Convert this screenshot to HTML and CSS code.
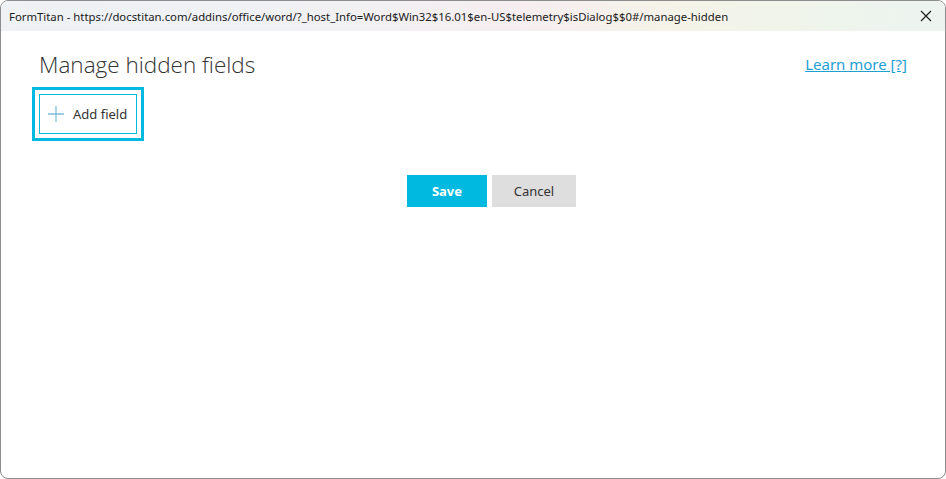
FILE: index.html
```html
<!DOCTYPE html>
<html lang="en">
<head>
  <meta charset="UTF-8" />
  <title>FormTitan - Manage hidden fields</title>
  <link rel="stylesheet" href="styles.css">
</head>
<body>
  <div class="window">
    <div class="titlebar">
      <span class="title">FormTitan - https://docstitan.com/addins/office/word/?_host_Info=Word$Win32$16.01$en-US$telemetry$isDialog$$0#/manage-hidden</span>
      <span class="close">
        <svg width="12" height="12" viewBox="0 0 12 12"><path d="M1 1 L11 11 M11 1 L1 11" stroke="#1a1a1a" stroke-width="1.1" fill="none"/></svg>
      </span>
    </div>

    <main class="content">
      <div class="head-row">
        <h1>Manage hidden fields</h1>
        <a href="#" class="learn">Learn more [?]</a>
      </div>

      <div class="focus-ring">
        <button class="add-btn" type="button">
          <svg width="16" height="16" viewBox="0 0 16 16"><path d="M8 0 V16 M0 8 H16" stroke="#7fbfd9" stroke-width="1.3" fill="none"/></svg>
          <span>Add field</span>
        </button>
      </div>

      <div class="actions">
        <button class="btn save" type="button">Save</button>
        <button class="btn cancel" type="button">Cancel</button>
      </div>
    </main>
  </div>
</body>
</html>
```

FILE: styles.css
```css
html, body {
  margin: 0;
  padding: 0;
  background: #fff;
}
body {
  font-family: "Noto Sans", "Open Sans", sans-serif;
  color: #333;
}
.window {
  box-sizing: border-box;
  width: 946px;
  height: 479px;
  border: 1px solid #8c8c8c;
  border-radius: 8px;
  overflow: hidden;
  background: #fff;
}
.titlebar {
  height: 30px;
  display: flex;
  align-items: center;
  justify-content: space-between;
  padding: 0 13px 0 8px;
  background: linear-gradient(90deg, #eef2f5 0%, #f1f1f4 35%, #f6eef0 55%, #f5f3e9 72%, #eef5ec 88%, #edf3ef 100%);
}
.title {
  font-size: 11.35px;
  color: #1a1a1a;
  white-space: nowrap;
}
.close {
  display: flex;
  align-items: center;
}
.content {
  padding: 21px 38px 0 38px;
}
.head-row {
  display: flex;
  justify-content: space-between;
  align-items: flex-start;
  height: 30px;
}
h1 {
  margin: -2px 0 0 0;
  font-family: "Open Sans", sans-serif;
  font-weight: 300;
  font-size: 22.5px;
  color: #333;
  line-height: 30px;
}
.learn {
  margin-top: 2px;
  font-size: 15px;
  color: #1ea0d2;
  text-decoration: underline;
}
.focus-ring {
  display: inline-block;
  margin: 5px 0 0 -7px;
  padding: 4px;
  border: 3px solid #00b9e1;
}
.add-btn {
  display: flex;
  align-items: center;
  gap: 9px;
  height: 40px;
  padding: 0 9px 0 8px;
  border: 1px solid #00b9e1;
  border-radius: 0;
  background: #fff;
  font-family: "Noto Sans", sans-serif;
  font-size: 13px;
  color: #333;
  cursor: pointer;
}
.actions {
  display: flex;
  justify-content: center;
  gap: 5px;
  margin-top: 34px;
  padding-left: 37px;
}
.btn {
  height: 32px;
  border: none;
  font-family: "Noto Sans", sans-serif;
  font-size: 13px;
  cursor: pointer;
}
.save {
  width: 80px;
  background: #00b9e1;
  color: #fff;
  font-weight: bold;
}
.cancel {
  width: 84px;
  background: #dedede;
  color: #333;
}
```
